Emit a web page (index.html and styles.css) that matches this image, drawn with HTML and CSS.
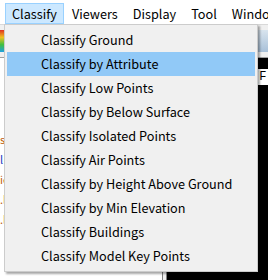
FILE: index.html
```html
<!DOCTYPE html>
<html lang="en">
<head>
    <meta charset="UTF-8">
    <title>Classify menu</title>
    <link rel="stylesheet" href="styles.css">
</head>
<body>
    <div class="window">
        <div class="menubar">
            <span class="menu-title open">Classify</span>
            <span class="menu-title">Viewers</span>
            <span class="menu-title">Display</span>
            <span class="menu-title">Tool</span>
            <span class="menu-title">Window</span>
        </div>

        <div class="toolbar">
            <div class="ramp"></div>
            <div class="tool-right"></div>
        </div>

        <div class="workspace">
            <div class="side-panel">
                <span class="frag orange">s</span>
                <span class="frag blue">l·</span>
                <span class="frag orange">ie</span>
                <span class="frag orange">.l</span>
                <span class="frag orange">.l</span>
            </div>
            <div class="splitter"></div>
            <div class="view">
                <div class="view-label">[F.</div>
            </div>
        </div>

        <!-- dropdown of the Classify menu -->
        <ul class="dropdown">
            <li>Classify Ground</li>
            <li class="hover">Classify by Attribute</li>
            <li>Classify Low Points</li>
            <li>Classify by Below Surface</li>
            <li>Classify Isolated Points</li>
            <li>Classify Air Points</li>
            <li>Classify by Height Above Ground</li>
            <li>Classify by Min Elevation</li>
            <li>Classify Buildings</li>
            <li>Classify Model Key Points</li>
        </ul>
    </div>
</body>
</html>
```

FILE: styles.css
```css
body {
    margin: 0;
    font-family: "Noto Sans CJK SC", "Noto Sans", sans-serif;
    font-size: 12.7px;
    color: #000;
    background: #fff;
}

.window {
    position: relative;
    width: 268px;
    height: 280px;
    overflow: hidden;
    background: #fff;
}

/* Menu bar */
.menubar {
    display: flex;
    height: 25px;
    padding: 3px 0 0 5px;
    box-sizing: border-box;
    background: #fff;
    border-bottom: 1px solid #d9d9d9;
}

.menu-title {
    display: flex;
    flex: none;
    align-items: center;
    padding: 0 6px 1px;
    height: 21px;
    box-sizing: border-box;
    border: 1px solid transparent;
    margin-right: 1px;
    white-space: nowrap;
}

.menu-title.open {
    background: #cce8ff;
    border-color: #99d1ff;
}

/* Toolbar */
.toolbar {
    display: flex;
    justify-content: space-between;
    height: 32px;
    background: #f0f0f0;
    border-bottom: 1px solid #a0a0a0;
}

.ramp {
    width: 4px;
    height: 22px;
    margin-top: 5px;
    background: linear-gradient(#e03020, #f0c020, #40c040, #20a0e0);
}

.tool-right {
    width: 10px;
    height: 22px;
    margin-top: 5px;
    background: linear-gradient(#d8e4ee, #a8c0d8);
}

/* Work area */
.workspace {
    display: flex;
    height: 222px;
}

.side-panel {
    display: flex;
    flex: none;
    flex-direction: column;
    width: 162px;
    padding-top: 76px;
    gap: 9px;
    background: #fff;
    font-size: 11px;
    line-height: 11px;
}

.frag.orange { color: #c06010; }
.frag.blue { color: #2040c0; }

.splitter {
    flex: none;
    width: 3px;
    border-left: 1px solid #808080;
    border-right: 1px solid #808080;
    background: #f0f0f0;
}

.view {
    flex: 1;
    background: #000;
}

.view-label {
    margin-top: 11px;
    padding-left: 85px;
    height: 16px;
    background: #fff;
    font-family: "Liberation Mono", monospace;
    font-size: 12px;
    line-height: 16px;
}

/* Dropdown menu */
.dropdown {
    position: absolute;
    left: 4px;
    top: 24px;
    width: 254px;
    margin: 0;
    padding: 3px 2px;
    box-sizing: border-box;
    list-style: none;
    background: #f0f0f0;
    border: 1px solid #cccccc;
    box-shadow: 2px 2px 2px rgba(0, 0, 0, 0.35);
}

.dropdown li {
    height: 24px;
    line-height: 24px;
    padding-left: 34px;
    white-space: nowrap;
}

.dropdown li.hover {
    background: #91c9f7;
}
```
